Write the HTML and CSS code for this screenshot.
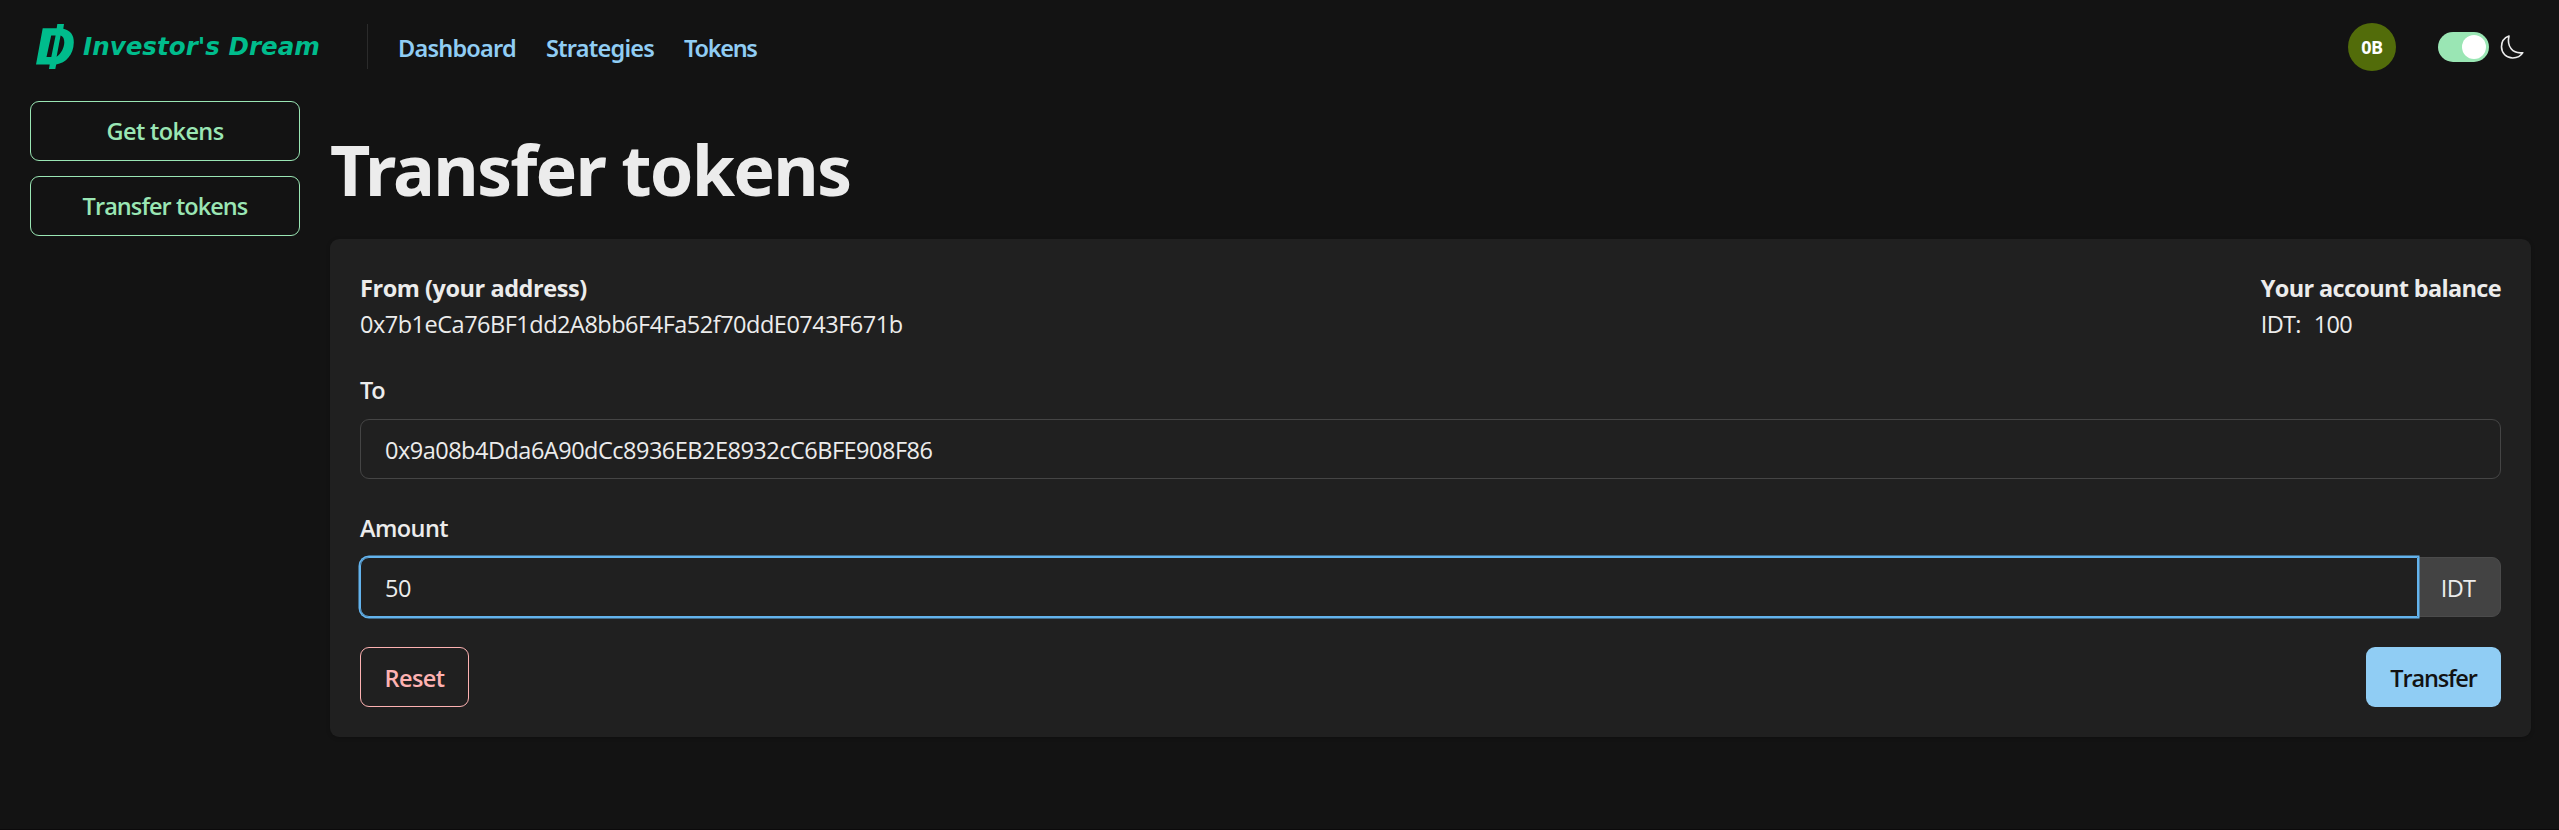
FILE: index.html
```
<!DOCTYPE html>
<html lang="en">
<head>
<meta charset="utf-8">
<title>Transfer tokens</title>
<link rel="stylesheet" href="styles.css">
</head>
<body>
<header class="topbar">
  <a class="brand">
    <svg class="brand-mark" viewBox="0 0 38 45" width="38" height="45">
      <path fill-rule="evenodd" d="M6.7 4.3H20.7L21.3 0H28L27.3 4.8C34.2 6.2 38 11 37.8 18.5C37.5 31 29.800 39 20.200 40.400L19.300 45H13L13.700 40.500H0Z M15.200 11.500L10.500 33H15.300L19.600 11.500Z M24.600 11.500L20.600 32.800C25.200 29.800 28.100 24 28.300 18.600C28.400 15 27.200 12.600 24.600 11.500Z"/>
    </svg>
    <span class="brand-name">Investor's Dream</span>
  </a>
  <nav class="nav">
    <a class="nav-link">Dashboard</a>
    <a class="nav-link">Strategies</a>
    <a class="nav-link nav-link-tight">Tokens</a>
  </nav>
  <div class="tools">
    <span class="avatar">0B</span>
    <span class="switch"><span class="thumb"></span></span>
    <svg class="moon" viewBox="0 0 24 26" width="24" height="26">
      <path d="M9 2C4.600 3.600 1.500 7.600 1.500 12.800C1.500 19.200 6.300 24 12.700 24C17.200 24 21 21.800 22.800 18.700C12.500 20 6.600 12.500 9 2Z"/>
    </svg>
  </div>
</header>
<div class="layout">
  <aside class="sidebar">
    <button class="btn btn-green">Get tokens</button>
    <button class="btn btn-green btn-green-long">Transfer tokens</button>
  </aside>
  <main>
    <h1 class="title">Transfer tokens</h1>
    <section class="card">
      <div class="summary">
        <div>
          <div class="row strong">From (your address)</div>
          <div class="row address">0x7b1eCa76BF1dd2A8bb6F4Fa52f70ddE0743F671b</div>
        </div>
        <div>
          <div class="row strong strong-tight">Your account balance</div>
          <div class="row balance"><span>IDT:</span><span>100</span></div>
        </div>
      </div>
      <div class="field">
        <div class="row label label-to">To</div>
        <div class="input">0x9a08b4Dda6A90dCc8936EB2E8932cC6BFE908F86</div>
      </div>
      <div class="field">
        <div class="row label">Amount</div>
        <div class="group">
          <div class="input input-focus">50</div>
          <div class="addon">IDT</div>
        </div>
      </div>
      <div class="actions">
        <button class="btn btn-red">Reset</button>
        <button class="btn btn-blue">Transfer</button>
      </div>
    </section>
  </main>
</div>
</body>
</html>
```
FILE: styles.css
```
* { box-sizing: border-box; }
body {
  margin: 0;
  min-height: 830px;
  background: #131313;
  color: #ececec;
  font: 400 23.5px/36px "Open Sans", "Noto Sans", sans-serif;
  border-bottom: 1px solid #0b0a0b;
}
.topbar {
  display: flex;
  align-items: center;
  height: 93px;
  padding: 0 30px 0 36px;
}
.brand { display: flex; align-items: center; gap: 9px; width: 331px; }
.brand-mark { flex: none; fill: #00bc8c; }
.brand-name {
  padding-top: 1px;
  color: #00bc8c;
  font: italic 700 24.6px/30px "DejaVu Sans", sans-serif;
  white-space: nowrap;
}
.nav {
  display: flex;
  align-items: center;
  gap: 30px;
  height: 45px;
  padding-left: 30px;
  border-left: 1px solid #2b2b2b;
}
.nav-link {
  padding-top: 3px;
  color: #90cdf4;
  font-family: "Noto Sans", sans-serif;
  font-weight: 600;
  letter-spacing: -0.78px;
}
.nav-link-tight { letter-spacing: -1.3px; }
.tools { display: flex; align-items: center; margin-left: auto; }
.avatar {
  width: 48px;
  height: 48px;
  margin-right: 42px;
  border-radius: 50%;
  background: #526c0a;
  color: #fff;
  font: 700 18px/49px "Open Sans", sans-serif;
  letter-spacing: -0.5px;
  text-align: center;
}
.switch {
  display: flex;
  justify-content: flex-end;
  width: 51px;
  height: 30px;
  padding: 3px;
  border-radius: 15px;
  background: #9ae6b4;
}
.thumb { width: 24px; height: 24px; border-radius: 50%; background: #fff; }
.moon {
  margin-left: 11px;
  margin-right: 5px;
  fill: none;
  stroke: #ececec;
  stroke-width: 1.6;
  stroke-linejoin: round;
}
.layout {
  display: grid;
  grid-template-columns: 270px 1fr;
  gap: 30px;
  padding: 8px 28px 0 30px;
}
.sidebar { display: flex; flex-direction: column; gap: 15px; }
.btn {
  height: 60px;
  padding: 0;
  border: 1px solid transparent;
  border-radius: 9px;
  background: none;
  font: 600 23.5px/58px "Open Sans", "Noto Sans", sans-serif;
  letter-spacing: -0.6px;
}
.btn-green { border-color: #9ae6b4; color: #9ae6b4; }
.btn-green-long { letter-spacing: -0.93px; }
.title {
  margin: 23px 0 25px;
  font-family: "Noto Sans", sans-serif;
  font-size: 70px;
  line-height: 90px;
  font-weight: 700;
  letter-spacing: -1.83px;
}
.card {
  padding: 30px;
  border-radius: 9px;
  background: #202020;
  box-shadow: 0 1px 4px rgba(0, 0, 0, 0.2);
}
.summary { display: flex; justify-content: space-between; }
.row { height: 36px; line-height: 38px; white-space: nowrap; }
.strong { font-weight: 700; letter-spacing: -0.45px; }
.strong-tight { letter-spacing: -0.66px; }
.address { letter-spacing: -0.49px; }
.balance { display: flex; gap: 13px; letter-spacing: -0.7px; }
.field { margin-top: 30px; }
.label { margin-bottom: 12px; font-weight: 600; letter-spacing: -0.58px; }
.label-to { letter-spacing: -2px; }
.input {
  flex: 1;
  height: 60px;
  padding: 0 24px;
  border: 1px solid #454545;
  border-radius: 9px;
  line-height: 60px;
  letter-spacing: -0.5px;
}
.group { display: flex; }
.input-focus {
  border-color: #63b3ed;
  border-radius: 9px 0 0 9px;
  box-shadow: 0 0 0 1.5px #63b3ed;
  z-index: 1;
}
.addon {
  width: 83px;
  height: 60px;
  padding-right: 3px;
  border: 1px solid #4b4b4b;
  border-radius: 0 9px 9px 0;
  background: #434343;
  line-height: 60px;
  letter-spacing: -0.7px;
  text-align: center;
}
.actions { display: flex; justify-content: space-between; margin-top: 30px; }
.btn-red,
.btn-blue { line-height: 60px; }
.btn-red { width: 109px; border-color: #feb2b2; color: #feb2b2; }
.btn-blue {
  width: 135px;
  background: #90cdf4;
  color: #121212;
  letter-spacing: -1.15px;
}
```
